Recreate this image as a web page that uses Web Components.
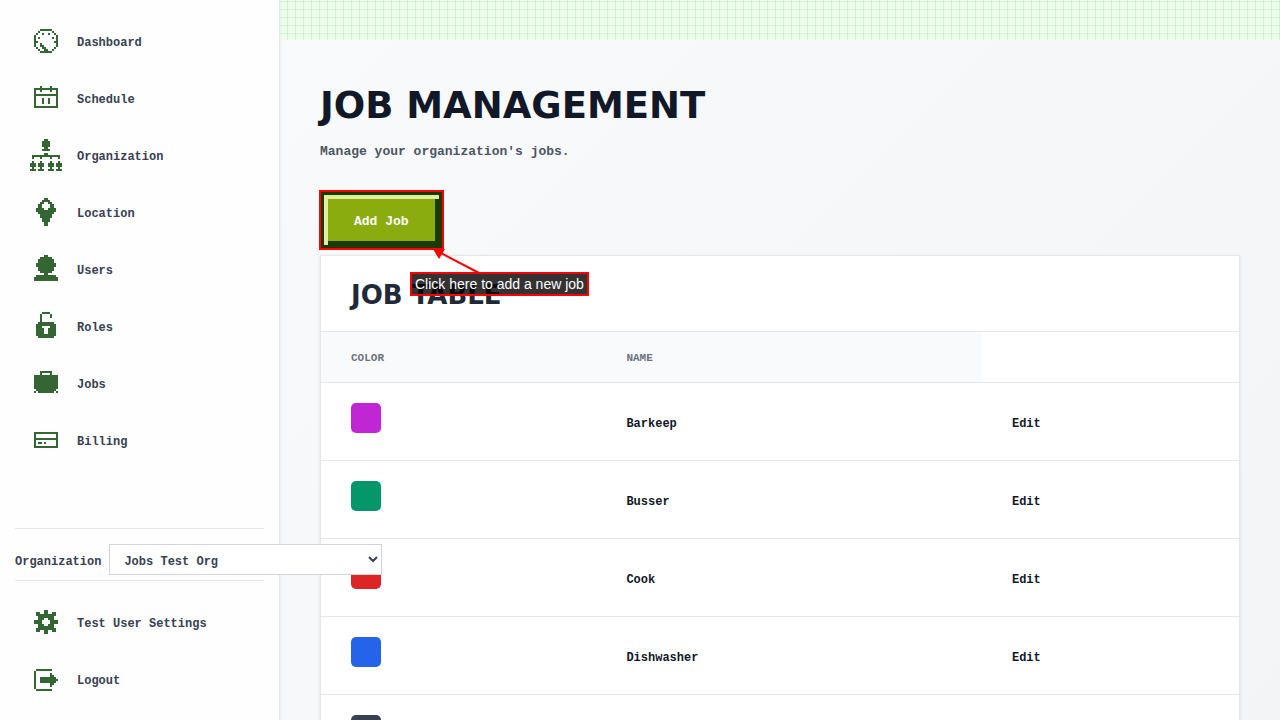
<!DOCTYPE html>
<html lang="en">
<head>
<meta charset="utf-8">
<title>Job Management</title>
<style>
    :root {
        --mono: "Liberation Mono", monospace;
        --display: "DejaVu Sans", sans-serif;
        --line: #e5e7eb;
        --ink: #111827;
        --ink-soft: #374151;
        --icon: #336633;
    }
    body {
        margin: 0;
        font: bold 12px/20px var(--mono);
        color: var(--ink-soft);
    }
</style>
</head>
<body>
<app-shell>
    <side-bar slot="sidebar">
        <nav-item icon="dashboard">Dashboard</nav-item>
        <nav-item icon="schedule">Schedule</nav-item>
        <nav-item icon="organization">Organization</nav-item>
        <nav-item icon="location">Location</nav-item>
        <nav-item icon="users">Users</nav-item>
        <nav-item icon="roles">Roles</nav-item>
        <nav-item icon="jobs">Jobs</nav-item>
        <nav-item icon="billing">Billing</nav-item>
        <org-picker slot="footer"></org-picker>
        <nav-item slot="footer" icon="settings">Test User Settings</nav-item>
        <nav-item slot="footer" icon="logout">Logout</nav-item>
    </side-bar>
    <page-header>
        <span slot="title">JOB MANAGEMENT</span>
        <span slot="subtitle">Manage your organization's jobs.</span>
    </page-header>
    <guide-tip>
        <pixel-button>Add Job</pixel-button>
        <span slot="tip">Click here to add a new job</span>
    </guide-tip>
    <job-table></job-table>
</app-shell>

<script>
// each icon is a small bitmap, one string per row of pixels
const ICONS = {
    dashboard: [
        '...######...', '..#......#..', '.#..#..#..#.', '#..........#',
        '#.#......#.#', '#..........#', '##........##', '#..#.......#',
        '#..##......#', '.#..##....#.', '..#..##..#..', '...######...'
    ],
    schedule: [
        '...#....#...', '############', '#..#....#..#', '#..........#',
        '############', '#..........#', '#...#..#...#', '#...#..#...#',
        '#...#..#...#', '#..........#', '############'
    ],
    organization: [
        '.......##.......', '......####......', '......####......', '......####......',
        '.......##.......', '......####......', '................', '.......##.......',
        '.##############.', '.#...#....#...#.', '................', '.#...#....#...#.',
        '###.###..###.###', '###.###..###.###', '.#...#....#...#.', '###.###..###.###'
    ],
    location: [
        '....##....', '...####...', '..##..##..', '.##....##.', '.##....##.',
        '####..####', '##########', '.########.', '..######..', '..######..',
        '...####...', '...####...', '....##....', '....##....'
    ],
    users: [
        '.....##.....', '...######...', '..########..', '..########..',
        '.##########.', '.##########.', '..########..', '..########..',
        '...######...', '.....##.....', '.##########.', '############', '############'
    ],
    roles: [
        '...####...', '..#....#..', '..#....#..', '..#.......', '..#.......',
        '.########.', '##########', '###....###', '####..####', '####..####',
        '####..####', '##########', '.########.'
    ],
    jobs: [
        '...######...', '...#....#...', '############', '############',
        '############', '############', '############', '############',
        '############', '.##########.', '#.########.#'
    ],
    billing: [
        '############', '#..........#', '#..........#', '############',
        '#..........#', '#.##.#.....#', '#..........#', '############'
    ],
    settings: [
        '.....##.....', '.##..##..##.', '.##########.', '..########..',
        '..###..###..', '####....####', '####....####', '..###..###..',
        '..########..', '.##########.', '.##..##..##.', '.....##.....'
    ],
    logout: [
        '............', '............', '.########...', '#...........', '#.......#...', '#.......##..',
        '#..########.', '#..#########', '#..########.', '#.......##..',
        '#.......#...', '#...........', '.########...'
    ]
};

const JOBS = [
    { name: 'Barkeep', color: '#c026d3' },
    { name: 'Busser', color: '#059669' },
    { name: 'Cook', color: '#dc2626' },
    { name: 'Dishwasher', color: '#2563eb' },
    { name: 'Host', color: '#374151' }
];

class AppShell extends HTMLElement {
    constructor() {
        super();
        this.attachShadow({ mode: 'open' });
        this.shadowRoot.innerHTML = `
            <style>
                :host {
                    display: grid;
                    grid-template-columns: 280px minmax(0, 1fr);
                    min-height: 100vh;
                }
                main {
                    background: linear-gradient(135deg, #f9fafb, #f3f4f6);
                }
                .band {
                    height: 40px;
                    background:
                        repeating-linear-gradient(to right, transparent 0 7px, rgba(0, 110, 0, 0.1) 7px 8px),
                        repeating-linear-gradient(to bottom, transparent 0 1px, rgba(0, 110, 0, 0.1) 1px 2px, transparent 2px 8px),
                        #edffed;
                }
                .content {
                    padding: 40px;
                }
            </style>
            <slot name="sidebar"></slot>
            <main>
                <div class="band"></div>
                <div class="content"><slot></slot></div>
            </main>
        `;
    }
}

class SideBar extends HTMLElement {
    constructor() {
        super();
        this.attachShadow({ mode: 'open' });
        this.shadowRoot.innerHTML = `
            <style>
                :host {
                    display: flex;
                    flex-direction: column;
                    justify-content: space-between;
                    box-sizing: border-box;
                    position: sticky;
                    top: 0;
                    z-index: 1;
                    height: 100vh;
                    padding: 15px;
                    background: #fefefe;
                    border-right: 1px solid var(--line);
                    box-shadow: 1px 0 3px rgba(0, 0, 0, 0.05);
                }
                nav, footer {
                    display: flex;
                    flex-direction: column;
                    gap: 5px;
                }
                footer ::slotted(org-picker) {
                    margin-bottom: 10px;
                }
            </style>
            <nav><slot></slot></nav>
            <footer><slot name="footer"></slot></footer>
        `;
    }
}

class PixelIcon extends HTMLElement {
    constructor() {
        super();
        this.attachShadow({ mode: 'open' });
    }

    connectedCallback() {
        const rows = ICONS[this.getAttribute('name')];
        const left = Math.floor((16 - rows[0].length) / 2);
        const top = Math.floor((16 - rows.length) / 2);
        let d = '';
        rows.forEach((row, y) => {
            for (const run of row.matchAll(/#+/g)) {
                const w = run[0].length;
                d += `M${left + run.index} ${top + y}h${w}v1h-${w}z`;
            }
        });
        this.shadowRoot.innerHTML = `
            <style>
                :host { display: block; flex: none; }
                svg { display: block; fill: var(--icon); }
            </style>
            <svg width="32" height="32" viewBox="0 0 16 16" shape-rendering="crispEdges" aria-hidden="true">
                <path d="${d}"/>
            </svg>
        `;
    }
}

class NavItem extends HTMLElement {
    constructor() {
        super();
        this.attachShadow({ mode: 'open' });
        this.shadowRoot.innerHTML = `
            <style>
                :host { display: block; }
                a {
                    display: flex;
                    align-items: center;
                    gap: 15px;
                    padding: 10px 15px;
                    color: inherit;
                    text-decoration: none;
                }
                a:hover { background: #f3f4f6; }
                span { padding-top: 4px; }
            </style>
            <a href="#"><pixel-icon name="${this.getAttribute('icon')}"></pixel-icon><span><slot></slot></span></a>
        `;
    }
}

class OrgPicker extends HTMLElement {
    constructor() {
        super();
        this.attachShadow({ mode: 'open' });
        this.shadowRoot.innerHTML = `
            <style>
                :host {
                    display: flex;
                    align-items: center;
                    gap: 8px;
                    padding: 15px 0 5px;
                    border-top: 1px solid var(--line);
                    border-bottom: 1px solid var(--line);
                }
                label { padding-top: 4px; }
                /* the select is wider than the sidebar and runs over the page */
                select {
                    flex: none;
                    box-sizing: border-box;
                    width: 273px;
                    height: 31px;
                    padding: 4px 0 0 10px;
                    font: inherit;
                    color: inherit;
                    background: #fff;
                    border: 1px solid #d1d5db;
                    border-radius: 0;
                }
            </style>
            <label for="org">Organization</label>
            <select id="org"><option>Jobs Test Org</option></select>
        `;
    }
}

class PageHeader extends HTMLElement {
    constructor() {
        super();
        this.attachShadow({ mode: 'open' });
        this.shadowRoot.innerHTML = `
            <style>
                :host { display: block; margin-bottom: 29px; }
                h1 {
                    margin: 0 0 10px;
                    font: bold 37px/52px var(--display);
                    color: var(--ink);
                }
                p {
                    margin: 0;
                    font-size: 13px;
                    line-height: 20px;
                    color: #4b5563;
                }
            </style>
            <h1><slot name="title"></slot></h1>
            <p><slot name="subtitle"></slot></p>
        `;
    }
}

class PixelButton extends HTMLElement {
    constructor() {
        super();
        this.attachShadow({ mode: 'open' });
        this.shadowRoot.innerHTML = `
            <style>
                :host { display: block; }
                button {
                    display: block;
                    padding: 17px 30px 13px;
                    font: bold 13px/20px var(--mono);
                    color: #fff;
                    background: #8aac0f;
                    border: 4px solid #1c3a00;
                    box-shadow: inset 4px 4px #dfef9f, inset -4px -4px #1c3a00;
                }
            </style>
            <button type="button"><slot></slot></button>
        `;
    }
}

class GuideTip extends HTMLElement {
    constructor() {
        super();
        this.attachShadow({ mode: 'open' });
        this.shadowRoot.innerHTML = `
            <style>
                :host {
                    display: block;
                    position: relative;
                    width: fit-content;
                    margin-bottom: 6px;
                }
                .target { outline: 2px solid #f00; outline-offset: -1px; }
                svg {
                    position: absolute;
                    left: 100%;
                    top: 100%;
                    margin-left: -14px;
                    z-index: 1;
                    overflow: visible;
                }
                .tip {
                    position: absolute;
                    left: 90px;
                    top: 81px;
                    z-index: 1;
                    padding: 0 3px;
                    font: 14px/20px "Liberation Sans", sans-serif;
                    white-space: nowrap;
                    color: #fff;
                    background: rgba(0, 0, 0, 0.8);
                    border: 2px solid #f00;
                }
            </style>
            <div class="target"><slot></slot></div>
            <svg width="52" height="26" aria-hidden="true">
                <path d="M50 24L8 2" stroke="#f00" stroke-width="2"/>
                <path d="M4 0H16L10 10z" fill="#f00"/>
            </svg>
            <div class="tip" role="tooltip"><slot name="tip"></slot></div>
        `;
    }
}

class JobTable extends HTMLElement {
    constructor() {
        super();
        this.attachShadow({ mode: 'open' });
        const rows = JOBS.map(job => `
            <tr>
                <td class="color"><div class="swatch" style="background: ${job.color}"></div></td>
                <td>${job.name}</td>
                <td><a href="#">Edit</a></td>
            </tr>`).join('');
        this.shadowRoot.innerHTML = `
            <style>
                :host {
                    display: block;
                    background: #fff;
                    border: 1px solid var(--line);
                    box-shadow: 0 1px 3px rgba(0, 0, 0, 0.1);
                    color: var(--ink);
                }
                h2 {
                    margin: 0;
                    padding: 24px 30px 21px;
                    font: bold 26px/30px var(--display);
                    color: #1f2937;
                    border-bottom: 1px solid var(--line);
                }
                table {
                    width: 100%;
                    table-layout: fixed;
                    border-collapse: separate;
                    border-spacing: 0;
                }
                th, td {
                    box-sizing: border-box;
                    padding: 2px 30px 0;
                    text-align: left;
                    border-bottom: 1px solid var(--line);
                }
                th {
                    height: 51px;
                    font-size: 11px;
                    color: #6b7280;
                    background: #f9fafb;
                }
                th:nth-child(1) { width: 30%; }
                th:nth-child(2) { width: 42%; }
                tbody td {
                    height: 78px;
                    padding-top: 4px;
                }
                tbody .color {
                    padding-top: 20px;
                    vertical-align: top;
                }
                .swatch {
                    width: 30px;
                    height: 30px;
                    border-radius: 5px;
                }
                a { color: inherit; text-decoration: none; }
            </style>
            <h2>JOB TABLE</h2>
            <table>
                <thead>
                    <tr><th scope="col">COLOR</th><th scope="col">NAME</th><td></td></tr>
                </thead>
                <tbody>${rows}</tbody>
            </table>
        `;
    }
}

customElements.define('app-shell', AppShell);
customElements.define('side-bar', SideBar);
customElements.define('pixel-icon', PixelIcon);
customElements.define('nav-item', NavItem);
customElements.define('org-picker', OrgPicker);
customElements.define('page-header', PageHeader);
customElements.define('pixel-button', PixelButton);
customElements.define('guide-tip', GuideTip);
customElements.define('job-table', JobTable);
</script>
</body>
</html>
